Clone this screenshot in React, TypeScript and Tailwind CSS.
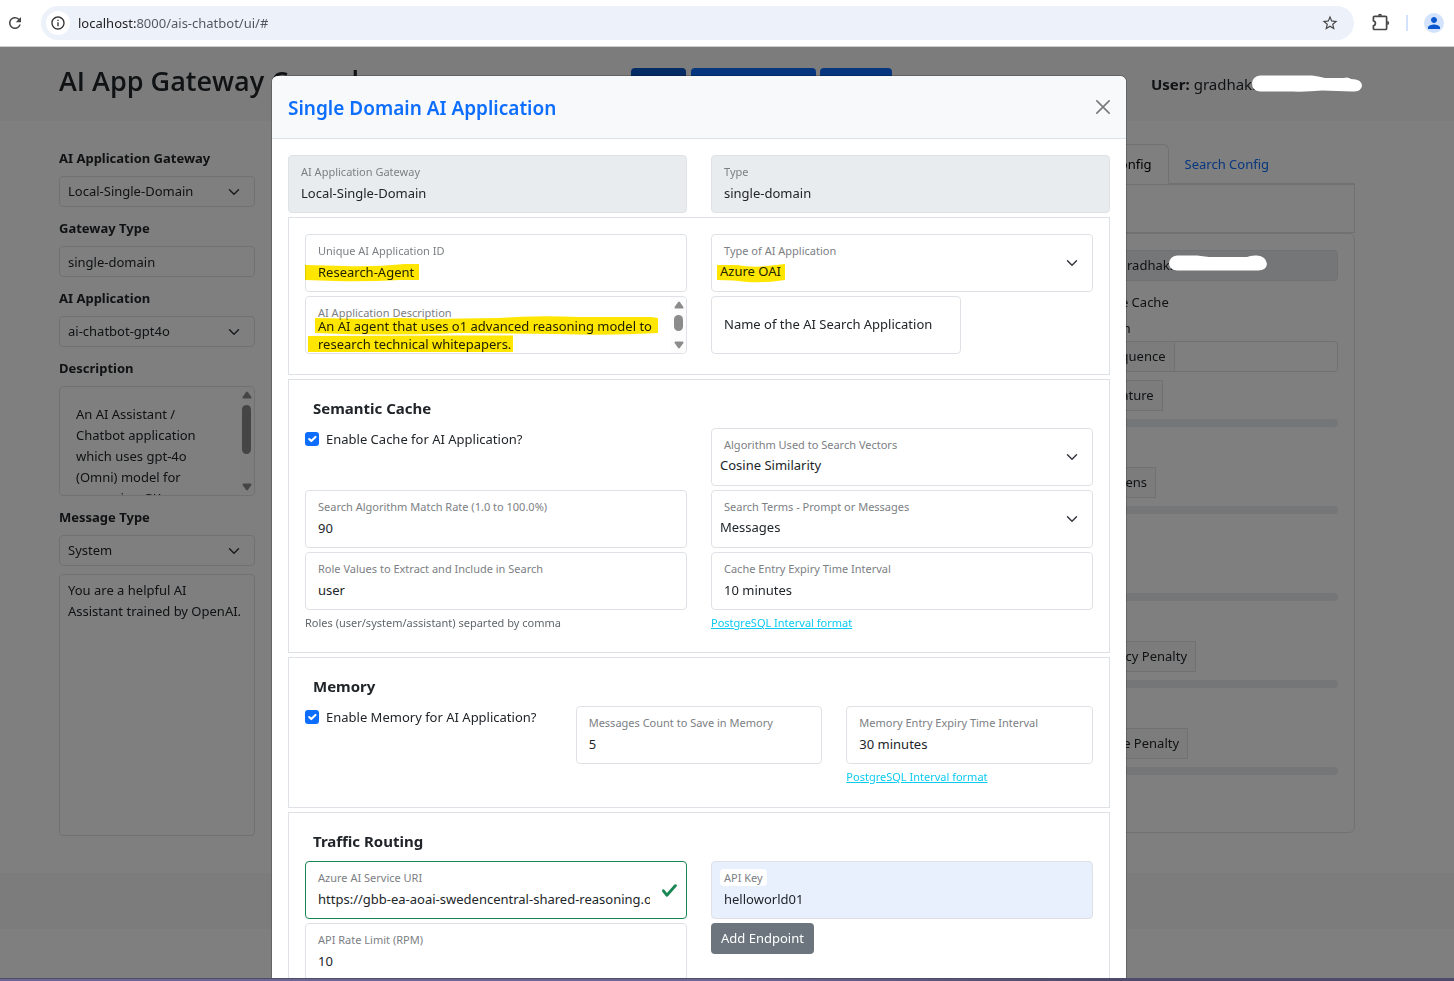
import React, { useId } from "react";
import { MdInfoOutline, MdPerson, MdRefresh, MdStarBorder } from "react-icons/md";

function Chevron() {
  return (
    <svg viewBox="0 0 16 16" className="h-3 w-3" fill="none" stroke="#343a40" strokeWidth="2" strokeLinecap="round" strokeLinejoin="round" aria-hidden="true">
      <path d="m2 5 6 6 6-6" />
    </svg>
  );
}

function Mark({ d, box, className }: { d: string; box: string; className: string }) {
  return (
    <svg viewBox={box} className={`pointer-events-none absolute mix-blend-multiply ${className}`} aria-hidden="true">
      <path d={d} fill="#ffe600" />
    </svg>
  );
}

function ScrollTrack({ thumb }: { thumb: string }) {
  return (
    <div className="flex w-[15px] shrink-0 flex-col items-center justify-between rounded-r bg-[#fcfcfc] py-1" aria-hidden="true">
      <svg viewBox="0 0 10 8" className="h-2 w-2.5 shrink-0" fill="#8b8b8b"><path d="M4 1.2 Q5 0 6 1.2 L9.4 6 Q10 7.6 8.4 7.6 H1.6 Q0 7.6 .6 6z" /></svg>
      <div className="w-full flex-1 px-[3px] py-1.5">
        <div className={`rounded-full bg-[#8b8b8b] ${thumb}`} />
      </div>
      <svg viewBox="0 0 10 8" className="h-2 w-2.5 shrink-0" fill="#8b8b8b"><path d="M4 6.8 Q5 8 6 6.8 L9.4 2 Q10 .4 8.4 .4 H1.6 Q0 .4 .6 2z" /></svg>
    </div>
  );
}

type FieldProps = {
  label: string;
  value: string;
  disabled?: boolean;
  valid?: boolean;
  autofilled?: boolean;
  children?: React.ReactNode;
};

function Field({ label, value, disabled, valid, autofilled, children }: FieldProps) {
  const id = useId();
  const tone = valid ? "border-[#198754] bg-white" : autofilled ? "border-[#dee2e6] bg-[#e8f0fe]" : disabled ? "border-[#dee2e6] bg-[#e9ecef]" : "border-[#dee2e6] bg-white";
  return (
    <div className={`relative flex h-[58px] flex-col items-start rounded border px-3 pt-[7px] ${tone}`}>
      <label htmlFor={id} className={`text-[11px] leading-[17px] text-[#7c8084] ${autofilled ? "-mx-1 rounded bg-white px-1" : ""}`}>
        {label}
      </label>
      <div className={`flex w-full pt-0.5 ${valid ? "pr-6" : ""}`}>
        <input id={id} defaultValue={value} disabled={disabled} className="h-[21px] w-full min-w-0 bg-transparent text-[13px] text-[#212529] outline-none" />
      </div>
      {valid && (
        <svg viewBox="0 0 8 8" className="absolute right-2 top-5 h-[17px] w-[17px]" aria-hidden="true">
          <path fill="#198754" d="M2.3 6.73.6 4.53c-.4-1.04.46-1.4 1.1-.8l1.1 1.4 3.4-3.8c.6-.63 1.6-.27 1.2.7l-4 4.6c-.43.5-.8.4-1.1.1z" />
        </svg>
      )}
      {children}
    </div>
  );
}

function SelectField({ label, value, children }: { label: string; value: string; children?: React.ReactNode }) {
  const id = useId();
  return (
    <div className="relative flex h-[58px] items-center rounded border border-[#dee2e6] bg-white pr-[14px]">
      <div className="flex flex-1 flex-col gap-0.5 self-stretch pt-[7px]">
        <label htmlFor={id} className="px-3 text-[11px] leading-[17px] text-[#7c8084]">{label}</label>
        <select id={id} defaultValue={value} className="h-[21px] w-full appearance-none bg-transparent pl-2 text-[13px] text-[#212529] outline-none">
          <option>{value}</option>
        </select>
      </div>
      <Chevron />
      {children}
    </div>
  );
}

function Check({ label }: { label: string }) {
  return (
    <label className="flex h-[21px] items-center gap-[7px] text-[13px] text-[#212529]">
      <span className="grid h-[14px] w-[14px]">
        <input type="checkbox" defaultChecked className="col-start-1 row-start-1 h-[14px] w-[14px] appearance-none rounded-[3px] bg-[#0d6efd]" />
        <svg viewBox="0 0 20 20" className="pointer-events-none col-start-1 row-start-1" fill="none" stroke="#fff" strokeWidth="3" strokeLinecap="round" strokeLinejoin="round" aria-hidden="true">
          <path d="m6 10 3 3 6-6" />
        </svg>
      </span>
      <span className="pt-0.5">{label}</span>
    </label>
  );
}

function Section({ title, children }: { title?: string; children: React.ReactNode }) {
  return (
    <section className="mt-1 border border-[#dee2e6] p-4">
      {title && <h6 className="mb-2 h-6 px-2 text-[15px] font-bold leading-6 text-[#212529]">{title}</h6>}
      {children}
    </section>
  );
}

function Row({ children, three }: { children: React.ReactNode; three?: boolean }) {
  return <div className={`grid gap-x-6 ${three ? "mb-[5px] grid-cols-3" : "mb-1 grid-cols-2"}`}>{children}</div>;
}

function IntervalLink() {
  return (
    <a href="#" className="mt-1 block text-[11px] leading-[18px] text-[#0dcaf0] underline">PostgreSQL Interval format</a>
  );
}

function SideSelect({ label, value }: { label: string; value: string }) {
  const id = useId();
  return (
    <div className="mb-2.5">
      <label htmlFor={id} className="mb-1.5 block text-[13px] font-bold leading-[23px]">{label}</label>
      <div className="flex h-[31px] items-center rounded border border-[#dee2e6] pr-[14px]">
        <select id={id} defaultValue={value} className="h-full min-w-0 flex-1 appearance-none bg-transparent pl-2 pt-px text-[13px] outline-none">
          <option>{value}</option>
        </select>
        <Chevron />
      </div>
    </div>
  );
}

function Sidebar() {
  return (
    <aside className="w-[196px]">
      <SideSelect label="AI Application Gateway" value="Local-Single-Domain" />
      <div className="mb-2.5">
        <label htmlFor="gw-type" className="mb-1.5 block text-[13px] font-bold leading-[23px]">Gateway Type</label>
        <input id="gw-type" readOnly value="single-domain" className="h-[31px] w-full rounded border border-[#dee2e6] px-2 text-[13px]" />
      </div>
      <SideSelect label="AI Application" value="ai-chatbot-gpt4o" />
      <div className="mb-2.5">
        <label htmlFor="desc" className="mb-1.5 block text-[13px] font-bold leading-[23px]">Description</label>
        <div className="flex h-[110px] rounded border border-[#dee2e6]">
          <textarea
            id="desc"
            readOnly
            value={"An AI Assistant /\nChatbot application\nwhich uses gpt-4o\n(Omni) model for\nanswering GK"}
            className="min-w-0 flex-1 resize-none overflow-hidden whitespace-pre pb-4 pl-4 pt-[17px] text-[13px] leading-[21px]"
          />
          <ScrollTrack thumb="h-[49px]" />
        </div>
      </div>
      <div className="-mb-0.5">
        <SideSelect label="Message Type" value="System" />
      </div>
      <textarea
        aria-label="System message"
        defaultValue={"You are a helpful AI\nAssistant trained by OpenAI."}
        className="block h-[262px] w-full resize-none whitespace-pre rounded border border-[#dee2e6] px-2 py-[5px] text-[13px] leading-[21px]"
      />
    </aside>
  );
}

function Param({ label }: { label?: string }) {
  return (
    <div className="mb-10 mt-2">
      <div className="flex h-[31px] w-fit items-center border border-[#dee2e6] bg-[#f8f9fa] px-2 pt-px text-[13px]">{label}</div>
      <div className="mt-2 h-2 rounded-full bg-[#e9ecef]" />
    </div>
  );
}

function ConfigPanel() {
  return (
    <div className="w-[306px]">
      <nav className="-mt-[3px] flex justify-end border-b border-[#dee2e6] pr-[70px] text-[13px]">
        <a href="#" className="-mb-px flex h-10 items-center rounded-t-md border border-b-white border-[#dee2e6] bg-white px-4 pt-0.5 text-black">Model Config</a>
        <a href="#" className="flex h-[39px] items-center px-4 pt-[3px] text-[#0d6efd]">Search Config</a>
      </nav>
      <div className="h-[49px] border border-[#dee2e6]" />
      <div className="h-[600px] rounded-md border border-[#dee2e6] p-4">
        <div className="flex h-[31px] text-[13px]">
          <span className="flex w-11 items-center rounded-l border border-[#dee2e6] bg-[#f8f9fa] px-2">User</span>
          <input aria-label="User" readOnly value="gradhak." className="min-w-0 flex-1 rounded-r border border-[#dee2e6] bg-[#e9ecef] px-2 pt-px" />
        </div>
        <div className="mt-2.5"><Check label="Enable Cache" /></div>
        <div className="mb-0.5 h-[27px] pt-[5px]"><Check label="Stream" /></div>
        <div className="flex h-[31px] text-[13px]">
          <label htmlFor="stop" className="flex items-center rounded-l border border-[#dee2e6] bg-[#f8f9fa] px-2 pt-px">Stop Sequence</label>
          <input id="stop" className="min-w-0 flex-1 rounded-r border border-l-0 border-[#dee2e6] px-2" />
        </div>
        <Param label="Temperature" />
        <Param label="Max Tokens" />
        <Param label="Top P" />
        <Param label="Frequency Penalty" />
        <Param label="Presence Penalty" />
      </div>
    </div>
  );
}

function BrowserBar() {
  return (
    <div className="flex h-[47px] shrink-0 items-center border-b border-[#cfcfcf] bg-white pl-[6px] pr-[10px]">
      <button aria-label="Reload" className="text-[#474747]"><MdRefresh size={18} /></button>
      <div className="ml-[17px] flex h-[34px] flex-1 items-center rounded-full bg-[#edf1fa] pl-[5px] pr-[15px]">
        <button aria-label="Site information" className="grid h-6 w-6 place-items-center rounded-full bg-white text-[#333]"><MdInfoOutline size={16} /></button>
        <input
          aria-label="Address"
          defaultValue="localhost:8000/ais-chatbot/ui/#"
          className="ml-2 h-6 min-w-0 flex-1 bg-[linear-gradient(90deg,#1f1f1f_58px,#50545a_58px)] bg-clip-text text-[13px] text-transparent outline-none"
        />
        <button aria-label="Bookmark" className="text-[#474747]"><MdStarBorder size={18} /></button>
      </div>
      <button aria-label="Extensions" className="ml-[17px]">
        <svg viewBox="0 0 20 20" className="h-5 w-5" aria-hidden="true">
          <path d="M3.4 3.3h11.200q1 0 1 1v11.200q0 1-1 1H3.400q-1 0-1-1v-2.700c2.700-.6 2.700-4.400 0-5V4.300q0-1 1-1z" fill="none" stroke="#474747" strokeWidth="1.700" strokeLinejoin="round" />
          <path d="M7 2.800a2 2 0 0 1 4 0zM16.200 7.900a2 2 0 0 1 0 4z" fill="#474747" />
        </svg>
      </button>
      <div className="ml-[15px] h-4 w-0.5 bg-[#d3e3fd]" />
      <button aria-label="Profile" className="ml-4 grid h-5 w-5 place-items-center rounded-full bg-[#d3e3fd] text-[#0b57d0]"><MdPerson size={18} /></button>
    </div>
  );
}

function PageBehind() {
  return (
    <div className="bg-white text-[#212529]">
      <header className="flex h-[74px] items-center bg-[#f8f9fa] pl-[59px] pr-[92px]">
        <h1 className="w-[572px] pb-1.5 font-['Open_Sans','Noto_Sans',sans-serif] text-[27px] font-semibold">AI App Gateway Console</h1>
        <div className="flex gap-[5px] pb-0.5 text-[13px] text-white">
          <button className="h-[31px] w-[55px] rounded bg-[#0a58ca]">Home</button>
          <button className="-mr-px h-[31px] w-[125px] rounded bg-[#0d6efd]">AI Applications</button>
          <button className="h-[31px] w-[72px] rounded bg-[#0d6efd]">Gateway</button>
        </div>
        <p className="ml-auto w-[211px] text-[15px]"><b>User:</b> gradhak.</p>
      </header>
      <main className="flex justify-between pb-[37px] pl-[59px] pr-[99px] pt-[26px]">
        <Sidebar />
        <ConfigPanel />
      </main>
      <footer className="h-14 bg-[#f8f9fa]" />
    </div>
  );
}

function AppDialog() {
  return (
    <div role="dialog" aria-labelledby="dlg-title" className="w-full max-w-[854px] self-start rounded-md bg-white ring-1 ring-black/20">
      <div className="flex h-[63px] items-center justify-between rounded-t-md border-b border-[#dee2e6] bg-[#f8f9fa] px-4">
        <h5 id="dlg-title" className="pt-0.5 text-[19px] font-semibold text-[#0d6efd]">Single Domain AI Application</h5>
        <button aria-label="Close">
          <svg viewBox="0 0 16 16" className="h-[14px] w-[14px]" fill="none" stroke="#7a7b7c" strokeWidth="1.9" strokeLinecap="round" aria-hidden="true">
            <path d="M1 1l14 14M15 1 1 15" />
          </svg>
        </button>
      </div>
      <div className="p-4">
        <Row>
          <Field label="AI Application Gateway" value="Local-Single-Domain" disabled />
          <Field label="Type" value="single-domain" disabled />
        </Row>

        <Section>
          <Row>
            <Field label="Unique AI Application ID" value="Research-Agent">
              <Mark className="-left-px top-7 h-5 w-[115px]" box="0 0 115 20" d="M0 2 L40 3 Q70 4 100 1 L114 1 V17 H95 Q60 19 30 18 L0 17z" />
            </Field>
            <SelectField label="Type of AI Application" value="Azure OAI">
              <Mark className="left-[5px] top-7 h-5 w-[69px]" box="0 0 69 20" d="M0 2 L20 2 Q35 5 50 3 L68 1 V17 Q50 20 30 19 Q18 17 0 17z" />
            </SelectField>
          </Row>
          <Row>
            <div className="relative flex h-[58px] rounded border border-[#dee2e6] bg-white">
              <div className="flex min-w-0 flex-1 flex-col pl-3 pt-2">
                <label htmlFor="app-desc" className="h-3 text-[11px] leading-4 text-[#7c8084]">AI Application Description</label>
                <textarea
                  id="app-desc"
                  rows={2}
                  defaultValue={"An AI agent that uses o1 advanced reasoning model to\nresearch technical whitepapers."}
                  className="h-9 resize-none overflow-hidden whitespace-pre bg-transparent text-[13px] leading-[18px] text-[#212529] outline-none"
                />
              </div>
              <ScrollTrack thumb="h-4" />
              <Mark
                className="left-0.5 top-[17px] h-10 w-[352px]"
                box="0 0 352 40"
                d="M7 4 L60 5 Q90 3 120 5 L190 4 Q230 1 270 3 L343 3 L350 4 V19 Q300 22 250 20 L150 19 Q80 22 7 19z M0 22 L150 21.500 H205 V38 H0z"
              />
            </div>
            <div className="h-[58px] w-[250px]">
              <input aria-label="Name of the AI Search Application" placeholder="Name of the AI Search Application" className="h-full w-full rounded border border-[#dee2e6] px-3 pb-0.5 text-[13px] placeholder:text-[#212529]" />
            </div>
          </Row>
        </Section>

        <Section title="Semantic Cache">
          <Row>
            <Check label="Enable Cache for AI Application?" />
            <SelectField label="Algorithm Used to Search Vectors" value="Cosine Similarity" />
          </Row>
          <Row>
            <Field label="Search Algorithm Match Rate (1.0 to 100.0%)" value="90" />
            <SelectField label="Search Terms - Prompt or Messages" value="Messages" />
          </Row>
          <Row>
            <div>
              <Field label="Role Values to Extract and Include in Search" value="user" />
              <p className="mt-1 text-[11px] leading-[18px] text-[#61666b]">Roles (user/system/assistant) separted by comma</p>
            </div>
            <div>
              <Field label="Cache Entry Expiry Time Interval" value="10 minutes" />
              <IntervalLink />
            </div>
          </Row>
        </Section>

        <Section title="Memory">
          <Row three>
            <Check label="Enable Memory for AI Application?" />
            <Field label="Messages Count to Save in Memory" value="5" />
            <div>
              <Field label="Memory Entry Expiry Time Interval" value="30 minutes" />
              <IntervalLink />
            </div>
          </Row>
        </Section>

        <Section title="Traffic Routing">
          <Row>
            <Field label="Azure AI Service URI" value="https://gbb-ea-aoai-swedencentral-shared-reasoning.openai.azure.com" valid />
            <Field label="API Key" value="helloworld01" autofilled />
          </Row>
          <Row>
            <Field label="API Rate Limit (RPM)" value="10" />
            <div>
              <button className="h-[31px] rounded bg-[#6c757d] px-2.5 pt-px text-[13px] text-white">Add Endpoint</button>
            </div>
          </Row>
        </Section>
      </div>
    </div>
  );
}

export default function App() {
  return (
    <div className="flex h-screen flex-col overflow-hidden bg-white font-['Noto_Sans','Open_Sans',sans-serif]">
      <BrowserBar />
      <div className="relative flex-1 overflow-hidden bg-white">
        <PageBehind />
        <div className="absolute inset-0 flex justify-center overflow-hidden bg-black/50 pr-14 pt-[29px]">
          <AppDialog />
        </div>
        <svg viewBox="0 0 110 18" className="absolute right-[92px] top-[28px] h-[18px] w-[110px]" fill="#fff" aria-hidden="true">
          <path d="M8 .5 H60 Q66 1 73 3 L92 3 Q96 1.500 99 4 Q110 4 110 11 Q109 17 100 16.500 L70 15.500 Q55 17 40 16.500 H8 Q0 16 0 8 Q1 1 8 .5z" />
        </svg>
        <svg viewBox="0 0 98 17" className="absolute right-[187px] top-[208px] h-[17px] w-[98px]" fill="#fff" aria-hidden="true">
          <path d="M8 .5 H28 Q34 1 40 2 H78 Q82 0 88 .5 Q97 1 98 9 Q97 16 88 15.500 H8 Q0 15 0 8 Q1 1 8 .5z" />
        </svg>
      </div>
      <div className="h-[3px] shrink-0 border-t border-[#4f4c68] bg-linear-to-r from-[#6b6694] from-50% to-[#4e4a6b] to-75%" />
    </div>
  );
}
